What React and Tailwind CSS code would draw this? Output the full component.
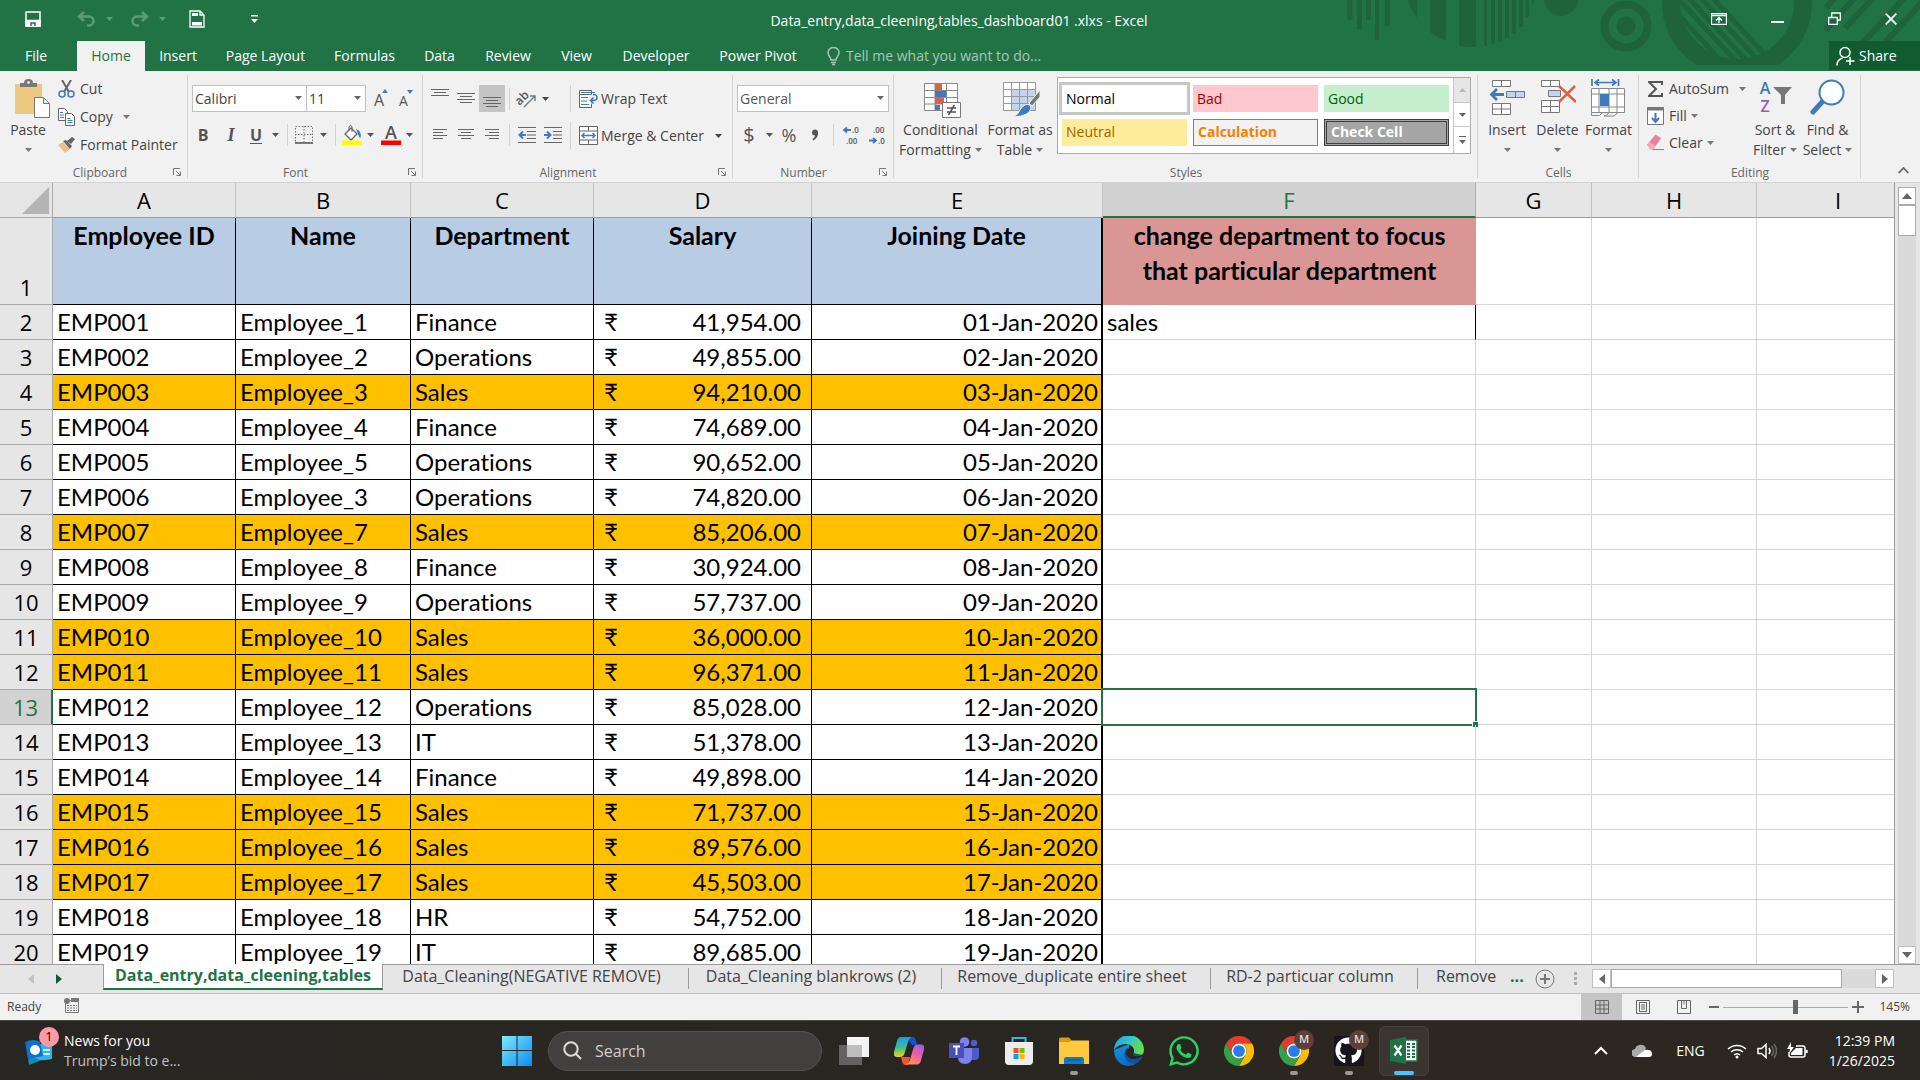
import React from "react";
import { FaWhatsapp, FaGithub } from "react-icons/fa";

const ui = "font-['Open_Sans','Noto_Sans',sans-serif]";

const Caret = ({ className = "" }) => (
  <svg width="7" height="4" viewBox="0 0 7 4" className={`shrink-0 ${className}`} fill="currentColor">
    <path d="M0 0h7L3.5 4z" />
  </svg>
);

const Arrow = ({ className = "" }) => (
  <svg width="10" height="6" viewBox="0 0 10 6" className={`shrink-0 ${className}`} fill="currentColor">
    <path d="M0 0h10L5 6z" />
  </svg>
);

const Launcher = () => (
  <button aria-label="More options" className="absolute right-[7px] bottom-[6px]">
    <svg width="8" height="8" viewBox="0 0 8 8" fill="none" stroke="#777">
      <path d="M.5 7V.5H7M3 3l4 4M7.5 3.5v4h-4" />
    </svg>
  </button>
);

const Group = ({ label, className, labelClass = "", launcher, children }) => (
  <section className={`relative flex shrink-0 flex-col ${className}`}>
    <div className="flex h-[89px] shrink-0 px-1">{children}</div>
    <div className={`h-[22px] shrink-0 text-center text-xs leading-[26px] text-[#666] ${labelClass}`}>{label}</div>
    {launcher && <Launcher />}
    <span className="absolute top-1 right-0 h-[103px] w-px bg-[#d2d2d2]" />
  </section>
);

const Sep = ({ className = "" }) => <span className={`h-[22px] w-px shrink-0 bg-[#d2d2d2] ${className}`} />;

/* ---------- title bar ---------- */
const Backdrop = () => (
  <svg className="absolute top-0 right-0" width="580" height="71" viewBox="0 0 580 71" fill="#1e633c">
    <path d="M7.500 0h5v20h-5zM17 0h5v29h-5zM26 0h5v20h-5zM35 0h4v40h-4zM45 0h5v26h-5z" />
    <path d="M68 0h9v18q-6-8-9-18zM90 0h16v41q-9-3-16-9zM119 0h17v47h-8l-9-1z" />
    <path d="M144 0h3v46h-3zM151 0h4v44h-4zM158 0h4v42h-4zM165 0h4v38h-4zM172 0h4v34h-4zM179 0h4v27h-4zM186 0h3v17h-3zM192 0h3l-3 8z" />
    <circle cx="221" cy="-1" r="17" />
    <circle cx="286" cy="26" r="21.500" fill="none" stroke="#1e633c" strokeWidth="8" />
    <circle cx="286" cy="26" r="9.500" />
    <clipPath id="ringCut"><path d="M300 0h200v65H300z" /></clipPath>
    <clipPath id="ringIn"><circle cx="397" cy="2" r="58" /></clipPath>
    <circle cx="397" cy="2" r="66" fill="none" stroke="#1e633c" strokeWidth="18" clipPath="url(#ringCut)" />
    <g clipPath="url(#ringIn)" stroke="#1e633c" strokeWidth="5">
      <path d="M330 5l60 66M330-10l75 81M336-16l80 87M348-16l80 87M360-16l80 87" />
    </g>
    <g stroke="#1e633c" strokeWidth="6">
      <path d="M486 8l10-12M486 30l32-36M505 28l32-34M518 48l50-54M540 48l46-50" />
    </g>
  </svg>
);

const TitleBar = () => (
  <div className="relative flex h-[41px] items-center text-white">
    <div className="flex flex-1 items-center pb-1 pl-[25px]">
      <button aria-label="Save" className="mr-9">
        <svg width="16" height="16" viewBox="0 0 16 16" fill="none" stroke="#fff" strokeWidth="1.500">
          <path d="M1 1h14v14H1z" /><path d="M1 9.500h14V15H1z" fill="#fff" /><path d="M6 15v-3h4v3" stroke="#217346" />
        </svg>
      </button>
      <button aria-label="Undo" className="mr-[10px] text-[#5d9b78]">
        <svg width="19" height="16" viewBox="0 0 19 16" fill="none" stroke="currentColor" strokeWidth="2.500">
          <path d="M7 1L2 5.500 7 10M2 5.500h10a4.500 4.500 0 0 1 0 9h-2" />
        </svg>
      </button>
      <Caret className="mr-[17px] text-[#5d9b78]" />
      <button aria-label="Redo" className="mr-[10px] text-[#5d9b78]">
        <svg width="19" height="16" viewBox="0 0 19 16" fill="none" stroke="currentColor" strokeWidth="2.500">
          <path d="M12 1l5 4.500L12 10M17 5.500H7a4.500 4.500 0 0 0 0 9h2" />
        </svg>
      </button>
      <Caret className="mr-[23px] text-[#5d9b78]" />
      <button aria-label="Print preview" className="mr-[46px]">
        <svg width="16" height="18" viewBox="0 0 16 18" fill="none" stroke="#fff" strokeWidth="1.300">
          <path d="M1 1h10l4 4v12H1zM11 1v4h4" /><path d="M3 3h6v3H3zM3 12h10v3.500H3z" fill="#fff" stroke="none" />
        </svg>
      </button>
      <button aria-label="Customize quick access toolbar">
        <svg width="7" height="8" viewBox="0 0 7 8" fill="#fff"><path d="M0 0h7v1.500H0zM0 4h7L3.500 8z" /></svg>
      </button>
    </div>
    <h1 className="pr-1 text-sm">Data_entry,data_cleening,tables_dashboard01 .xlxs - Excel</h1>
    <div className="relative flex flex-1 items-center justify-end gap-11 pr-[23px] pb-1">
      <button aria-label="Ribbon display options">
        <svg width="16" height="12" viewBox="0 0 16 12" fill="none" stroke="#fff"><path d="M.5.5h15v11H.5zM.5 2.500h15M8 10V4.500M5 7.500l3-3 3 3" strokeWidth="1.300" /></svg>
      </button>
      <button aria-label="Minimize"><svg width="13" height="12" viewBox="0 0 13 12"><path d="M0 8h13v2H0z" fill="#fff" /></svg></button>
      <button aria-label="Restore">
        <svg width="13" height="13" viewBox="0 0 13 13" fill="none" stroke="#fff" strokeWidth="1.300"><path d="M.7 5.500h8.600v6.800H.7zM3.700 5V1h8.600v7H9.500" /></svg>
      </button>
      <button aria-label="Close"><svg width="12" height="12" viewBox="0 0 12 12" stroke="#fff" strokeWidth="1.800"><path d="M.7.7l10.600 10.600M11.300.7L.7 11.300" /></svg></button>
    </div>
  </div>
);

const tabs = [
  ["Insert", "w-[66px]"], ["Page Layout", "w-[109px]"], ["Formulas", "w-[89px]"], ["Data", "w-[61px]"], ["Review", "w-[76px]"],
  ["View", "w-[61px]"], ["Developer", "w-[98px]"], ["Power Pivot", "w-[106px]"],
];

const Tabs = () => (
  <nav className="relative flex h-[30px] text-sm leading-7 text-white">
    <button className="w-[77px] pr-[5px]">File</button>
    <button className="w-[68px] bg-[#f1f1f1] text-[#217346]">Home</button>
    {tabs.map(([t, w]) => <button key={t} className={`shrink-0 whitespace-nowrap ${w}`}>{t}</button>)}
    <label className="ml-4 flex flex-1 items-center gap-1.5">
      <svg width="13" height="19" viewBox="0 0 13 19" fill="none" stroke="#a6c7b5" strokeWidth="1.500">
        <path d="M4 13c0-3-3-4-3-7.500a5.500 5 0 0 1 11 0C12 9 9 10 9 13zM4 15.500h5M5 17.500h3" />
      </svg>
      <input placeholder="Tell me what you want to do..." className="w-60 bg-transparent text-sm text-white outline-none placeholder:text-[#a6c7b5]" />
    </label>
    <button className="flex h-[29px] w-[91px] items-center gap-1 bg-[#105c30] pl-[7px]">
      <svg width="19" height="20" viewBox="0 0 19 20" fill="none" stroke="#fff" strokeWidth="1.500">
        <circle cx="9" cy="6.500" r="5" /><path d="M1 19.500c0-4 2-6.500 5.500-7.500M14 11v8M10 15h8.500" />
      </svg>
      Share
    </button>
  </nav>
);

/* ---------- ribbon icons ---------- */
const PasteIcon = () => (
  <svg width="35" height="39" viewBox="0 0 35 39">
    <path d="M0 5h27v30H0z" fill="#edc87f" />
    <path d="M5 8V4h4q0-4 4.500-4T18 4h4v4z" fill="#777" /><circle cx="13.500" cy="3.500" r="1.300" fill="#fff" />
    <path d="M19.500 18.500h9l6 6v14h-15zM28.500 18.500v6h6" fill="#fff" stroke="#777" />
  </svg>
);
const CutIcon = () => (
  <svg width="17" height="18" viewBox="0 0 17 18" fill="none">
    <path d="M4 0l7 12M13 0L6 12" stroke="#666" strokeWidth="2" />
    <circle cx="4" cy="14" r="3" stroke="#3f7abd" strokeWidth="1.500" /><circle cx="13" cy="14" r="3" stroke="#3f7abd" strokeWidth="1.500" />
  </svg>
);
const CopyIcon = () => (
  <svg width="17" height="18" viewBox="0 0 17 18" fill="#fff" stroke="#666">
    <path d="M.5.5h6l3 3v9h-9z" /><path d="M7.500 5.500h6l3 3v9h-9z" />
    <path d="M2 4.500h3M2 7h4M2 9.500h4M9.500 10.500h3M9.500 12.500h5M9.500 14.500h5" stroke="#3f7abd" />
  </svg>
);
const PainterIcon = () => (
  <svg width="17" height="16" viewBox="0 0 17 16">
    <path d="M0 8l5-3 7 7-5 4z" fill="#edc28a" /><path d="M5 4l3-1 6 6-2 3zM9 4l5-4 3 2-4 5z" fill="#666" />
  </svg>
);
const Lines = ({ rows }) => (
  <svg width="18" height="14" viewBox="0 0 18 14" fill="#666">
    {rows.map(([x, w], i) => <rect key={i} x={x} y={i * 3 + 1} width={w} height="1" />)}
  </svg>
);
const IndentIcon = ({ flip }) => (
  <svg width="18" height="16" viewBox="0 0 18 16">
    <path d="M0 0h18v1H0zM9 4h9v1H9zM9 7.500h9v1H9zM9 11h9v1H9zM0 15h18v1H0z" fill="#666" />
    {flip
      ? <path d="M0 8h6M3 4.500L6.500 8 3 11.500" fill="none" stroke="#3f7abd" strokeWidth="2" />
      : <path d="M8 8H2M5 4.500L1.500 8 5 11.500" fill="none" stroke="#3f7abd" strokeWidth="2" />}
  </svg>
);
const OrientIcon = () => (
  <svg width="19" height="18" viewBox="0 0 19 18" className="overflow-visible">
    <text x="-1" y="12" transform="rotate(-45 5 11)" fontSize="12" fill="#555" fontWeight="600">ab</text>
    <path d="M6 17L17 6M12 6h5v5" fill="none" stroke="#777" strokeWidth="1.400" />
  </svg>
);
const WrapIcon = () => (
  <svg width="19" height="18" viewBox="0 0 19 18" fill="none" stroke="#666">
    <path d="M.5.5h12v4H.5zM.5 4.500v13h12v-4" fill="#fff" /><path d="M2 2.500h14M2 7.500h7M2 11h6M2 14.500h8" stroke="#3f7abd" />
    <path d="M14 4.500q4 0 4 3t-4 3h-2M14.500 7.500l-3 3 3 3" stroke="#3f7abd" strokeWidth="1.600" />
  </svg>
);
const MergeIcon = () => (
  <svg width="19" height="19" viewBox="0 0 19 19" fill="#fff" stroke="#666">
    <path d="M.5.500h18v18H.5zM.5 5h18M.5 14h18M9.500.5V5M9.500 14v4.500" />
    <path d="M3 9.500h13M5.500 7L3 9.500 5.500 12M13.500 7L16 9.500 13.500 12" fill="none" stroke="#3f7abd" strokeWidth="1.500" />
  </svg>
);
const BorderIcon = () => (
  <svg width="18" height="18" viewBox="0 0 18 18" fill="none" stroke="#777">
    <path d="M.5.500h17v16H.5zM9 0v17M0 8.500h18" strokeDasharray="1.500 1.500" /><path d="M0 17h18" strokeWidth="1.500" stroke="#555" />
  </svg>
);
const FillIcon = () => (
  <svg width="20" height="20" viewBox="0 0 20 20">
    <path d="M9 3l6 6-6 6-6-6z" fill="#fff" stroke="#666" strokeWidth="1.300" /><path d="M7 6V1.500q2-2 3 0V7" fill="none" stroke="#666" />
    <path d="M14 4q6 2 4.500 9-2-1-2.500-4z" fill="#3f7abd" /><path d="M0 15.500h20v4.500H0z" fill="#ff0" />
  </svg>
);
const FontColorIcon = () => (
  <svg width="20" height="20" viewBox="0 0 20 20" className="overflow-visible">
    <text x="10" y="13.500" textAnchor="middle" fontSize="18" fontWeight="600" fill="#555">A</text><path d="M0 15.500h20v4.500H0z" fill="red" />
  </svg>
);
const CondIcon = () => (
  <svg width="37" height="35" viewBox="0 0 37 35">
    <path d="M.5.5h33v27H.5zM.5 7.500h33M.5 14.500h33M.5 21h33M11 .5v27M22.500.5v27" fill="#fff" stroke="#888" />
    <path d="M11 1h7v6h-7zM11 15h9v6h-9z" fill="#dc6141" /><path d="M11 8h11v6H11zM11 22h5v5h-5z" fill="#3f7abd" />
    <path d="M18.500 19.500h18v15h-18z" fill="#fff" stroke="#777" /><path d="M23 25h9M23 29h9M30.500 22l-6 10" stroke="#555" strokeWidth="1.500" />
  </svg>
);
const FormatTableIcon = () => (
  <svg width="38" height="36" viewBox="0 0 38 36">
    <path d="M.5.5h32v28H.5z" fill="#fff" /><path d="M9 8h24v20H9z" fill="#c2d5ec" />
    <path d="M.5.5h32v28H.5zM.5 7.500h32M.5 14.500h32M.5 21.500h32M8.500.5v28M16.500.5v28M24.500.5v28" fill="none" stroke="#999" />
    <path d="M37 8v7l-8 9-3-3z" fill="#777" stroke="#f1f1f1" /><path d="M22 23q5-2 6 3-1 8-18 9 6-3 7-7 1-3 5-5z" fill="#3f7abd" stroke="#f1f1f1" />
  </svg>
);
const InsertIcon = () => (
  <svg width="36" height="37" viewBox="0 0 36 37" fill="#fff" stroke="#777">
    <path d="M3.500 1.500h18v6h-18zM12.500 1.500v6M3.500 24.500h18v11h-18zM12.500 24.500v11M3.500 30h18" />
    <path d="M17.500 12.500h18v6h-18zM26.500 12.500v6" fill="#c2d5ec" /><path d="M15 15.500H2M8 10l-5.500 5.500L8 21" fill="none" stroke="#3f7abd" strokeWidth="2.800" />
  </svg>
);
const DeleteIcon = () => (
  <svg width="36" height="37" viewBox="0 0 36 37" fill="#fff" stroke="#777">
    <path d="M1.500 1.500h18v6h-18zM10.500 1.500v6M1.500 21.500h18v12h-18zM10.500 21.500v12M1.500 27.500h18" />
    <path d="M8.500 11.500h12v6h-12z" fill="#c2d5ec" /><path d="M19 7l17 16M35 7L19 23" fill="none" stroke="#dc6141" strokeWidth="2.500" />
  </svg>
);
const FormatIcon = () => (
  <svg width="35" height="38" viewBox="0 0 35 38" fill="#fff" stroke="#888">
    <path d="M.5 9.500h33v24H.5zM.5 15h33M.5 28h33M8 9.500v24M18 9.500v24M26 9.500v24" /><path d="M.5 33.500v3h8l3-3M13 37q3 0 5-3.500M13 37h10l4-3.500" fill="none" />
    <path d="M9 15h9v12H9z" fill="#3f7abd" stroke="none" /><path d="M1 0v7M27.500 0v7M4 3.500h21M8 .5L4 3.500l4 3M21 .5l4 3-4 3" fill="none" stroke="#3f7abd" strokeWidth="1.700" />
  </svg>
);
const SortIcon = () => (
  <span className="flex items-start">
    <span className="flex w-4 flex-col text-base leading-[18px] font-semibold"><span className="text-[#3f7abd]">A</span><span className="text-[#8e62b8]">Z</span></span>
    <svg width="20" height="36" viewBox="16 0 20 36"><path d="M16 8h19l-7 8v9h-4v-9z" fill="#777" /></svg>
  </span>
);
const FindIcon = () => (
  <svg width="35" height="36" viewBox="0 0 35 36">
    <path d="M13 22L3 33" stroke="#3f7abd" strokeWidth="5" strokeLinecap="round" /><circle cx="21.500" cy="13.500" r="12" fill="#fff" stroke="#3f7abd" strokeWidth="2" />
  </svg>
);

const IconBtn = ({ label, className = "", children }) => (
  <button aria-label={label} className={`flex shrink-0 items-center justify-center ${className}`}>{children}</button>
);

const BigButton = ({ icon, lines, className, iconClass = "", caretBelow }) => (
  <button className={`flex shrink-0 flex-col items-center ${className}`}>
    <span className={`flex h-[49px] items-start justify-center ${iconClass || "pt-2"}`}>{icon}</span>
    <span className="leading-5 whitespace-nowrap">{lines[0]}</span>
    {caretBelow
      ? <Caret className="mt-2 text-[#777]" />
      : <span className="flex items-center gap-1 leading-5">{lines[1]}<Caret className="text-[#777]" /></span>}
  </button>
);

const SmallButton = ({ icon, text, caret, gap = "gap-1" }) => (
  <button className="flex h-[27px] items-center whitespace-nowrap">
    <span className="flex w-[17px] justify-center">{icon}</span>
    <span className={`flex items-center pl-[5px] ${gap}`}>{text}{caret && <Caret className="text-[#777]" />}</span>
  </button>
);

const Combo = ({ label, options, className }) => (
  <div className={`relative h-[27px] shrink-0 ${className}`}>
    <select aria-label={label} className="h-full w-full appearance-none border border-[#c0c0c0] bg-white pl-[2px] text-sm outline-none">
      {options.map((o) => <option key={o}>{o}</option>)}
    </select>
    <Caret className="pointer-events-none absolute top-[11px] right-[5px] text-[#666]" />
  </div>
);

const styles = [
  ["Normal", "bg-white text-black outline-3 outline-[#c6c6c6]"], ["Bad", "bg-[#ffc7ce] text-[#9c0006]"], ["Good", "bg-[#c6efce] text-[#006100]"],
  ["Neutral", "bg-[#ffeb9c] text-[#9c6500]"], ["Calculation", "border border-[#7f7f7f] bg-[#f2f2f2] font-bold text-[#fa7d00]"],
  ["Check Cell", "border-3 border-double border-[#3f3f3f] bg-[#a5a5a5] font-bold text-white"],
];

const Ribbon = () => (
  <div className="flex h-[112px] border-b border-[#d2d2d2] bg-[#f1f1f1] text-sm text-[#444]">
    <Group label="Clipboard" className="w-[188px]" labelClass="pl-3" launcher>
      <button className="flex w-[54px] shrink-0 flex-col pt-2">
        <span className="h-[41px] pl-[11px]"><PasteIcon /></span>
        <span className="w-12 text-center leading-5">Paste</span>
        <span className="mt-2 flex w-12 justify-center"><Caret className="text-[#777]" /></span>
      </button>
      <div className="flex flex-col gap-px pt-1">
        <SmallButton icon={<CutIcon />} text="Cut" />
        <SmallButton icon={<CopyIcon />} text="Copy" caret gap="gap-2.5" />
        <SmallButton icon={<PainterIcon />} text="Format Painter" />
      </div>
    </Group>

    <Group label="Font" className="w-[235px]" labelClass="pr-5" launcher>
      <div className="flex flex-col gap-3 pt-[14px]">
        <div className="flex items-center">
          <Combo label="Font name" options={["Calibri", "Arial"]} className="w-[115px]" />
          <Combo label="Font size" options={["11", "12", "14"]} className="-ml-px w-[60px]" />
          <IconBtn label="Increase font size" className="ml-2">
            <svg width="14" height="20" viewBox="0 0 14 20" className="overflow-visible"><text x="0" y="17" fontSize="16" fill="#555">A</text><path d="M8 4l3-4 3 4z" fill="#3f7abd" /></svg>
          </IconBtn>
          <IconBtn label="Decrease font size" className="ml-[11px]">
            <svg width="14" height="20" viewBox="0 0 14 20" className="overflow-visible"><text x="0" y="17" fontSize="14" fill="#555">A</text><path d="M8 1h6l-3 4z" fill="#3f7abd" /></svg>
          </IconBtn>
        </div>
        <div className="flex h-[22px] items-center text-[#555]">
          <IconBtn label="Bold" className="w-[22px] text-base font-bold">B</IconBtn>
          <IconBtn label="Italic" className="w-[34px] font-['Liberation_Serif',serif] text-lg font-bold italic">I</IconBtn>
          <IconBtn label="Underline" className="w-4 text-base font-bold underline underline-offset-2">U</IconBtn>
          <Caret className="mx-2" /><Sep />
          <IconBtn label="Borders" className="mx-[7px]"><BorderIcon /></IconBtn><Caret className="mr-2" /><Sep />
          <IconBtn label="Fill color" className="mr-[5px] ml-[6px]"><FillIcon /></IconBtn><Caret />
          <IconBtn label="Font color" className="mr-[5px] ml-[7px]"><FontColorIcon /></IconBtn><Caret />
        </div>
      </div>
    </Group>

    <Group label="Alignment" className="w-[310px]" labelClass="pr-5" launcher>
      <div className="flex w-[143px] shrink-0 flex-col gap-3 pt-[14px]">
        <div className="flex h-[27px] items-center">
          <IconBtn label="Top align" className="h-[27px] w-[26px] pb-2"><Lines rows={[[0, 18], [3, 12], [0, 18]]} /></IconBtn>
          <IconBtn label="Middle align" className="h-[27px] w-[26px]"><Lines rows={[[0, 18], [3, 12], [0, 18], [3, 12]]} /></IconBtn>
          <IconBtn label="Bottom align" className="h-[27px] w-[26px] bg-[#c5c5c5] pt-2"><Lines rows={[[0, 18], [3, 12], [0, 18], [3, 12]]} /></IconBtn>
          <Sep className="ml-1" />
          <IconBtn label="Orientation" className="mr-[5px] ml-2"><OrientIcon /></IconBtn><Caret />
        </div>
        <div className="flex h-[22px] items-center">
          <IconBtn label="Align left" className="w-[26px]"><Lines rows={[[2, 14], [2, 10], [2, 14], [2, 10]]} /></IconBtn>
          <IconBtn label="Center" className="w-[26px]"><Lines rows={[[1, 16], [4, 10], [1, 16], [4, 10]]} /></IconBtn>
          <IconBtn label="Align right" className="w-[26px]"><Lines rows={[[2, 14], [6, 10], [2, 14], [6, 10]]} /></IconBtn>
          <Sep className="ml-1" />
          <IconBtn label="Decrease indent" className="ml-2"><IndentIcon /></IconBtn>
          <IconBtn label="Increase indent" className="ml-2"><IndentIcon flip /></IconBtn>
        </div>
      </div>
      <div className="flex shrink-0 flex-col gap-[10px] pt-[14px]">
        <button className="flex h-[27px] items-center gap-[3px] border-l border-[#d2d2d2] pl-2 whitespace-nowrap"><WrapIcon />Wrap Text</button>
        <button className="flex h-[27px] items-center gap-[3px] border-l border-[#d2d2d2] pl-2 whitespace-nowrap"><MergeIcon />Merge &amp; Center<Caret className="ml-2" /></button>
      </div>
    </Group>

    <Group label="Number" className="w-[161px]" labelClass="pr-5" launcher>
      <div className="flex shrink-0 flex-col gap-3 pt-[14px] text-[#555]">
        <Combo label="Number format" options={["General", "Number", "Currency"]} className="w-[152px]" />
        <div className="flex h-[22px] items-center">
          <IconBtn label="Accounting format" className="w-6 text-xl">$</IconBtn><Caret className="mr-1 ml-[5px]" />
          <IconBtn label="Percent style" className="w-6 text-lg">%</IconBtn>
          <IconBtn label="Comma style" className="mr-[11px] ml-[7px] w-[14px]">
            <svg width="8" height="12" viewBox="0 0 8 12" fill="#555"><circle cx="4" cy="3.500" r="3" /><path d="M7 3.500Q7.500 9 2 11.500L1.500 10q3-2 2.500-5z" /></svg>
          </IconBtn>
          <Sep />
          {[["Increase decimal", 0], ["Decrease decimal", 1]].map(([l, d]) => (
            <IconBtn key={l} label={l} className="ml-[9px]">
              <svg width="17" height="22" viewBox="0 0 17 22" fontSize="8" fontWeight="600" fill="#555" className="overflow-visible">
                <text x={d ? 4 : 9} y="9">{d ? ".00" : ".0"}</text><text x={d ? 9 : 3} y="20">{d ? ".0" : ".00"}</text>
                <path d={d ? "M0 16.500h6M4 14l3 2.500-3 2.500" : "M8 6H2M4 3.500L1 6l3 2.500"} fill="none" stroke="#3f7abd" strokeWidth="1.800" />
              </svg>
            </IconBtn>
          ))}
        </div>
      </div>
    </Group>

    <Group label="Styles" className="w-[584px]">
      <BigButton icon={<CondIcon />} lines={["Conditional", "Formatting"]} className="w-[85px]" iconClass="pt-3 pl-1" />
      <BigButton icon={<FormatTableIcon />} lines={["Format as", "Table"]} className="w-[74px]" iconClass="pt-[11px] pl-1" />
      <div className="mt-1.5 flex h-[77px] border border-[#ababab] bg-white">
        <div className="grid grid-cols-3 gap-x-[6px] gap-y-[6px] px-1 py-[7px]">
          {styles.map(([s, c]) => <button key={s} className={`h-[27px] w-[125px] pl-1 text-left leading-5 ${c}`}>{s}</button>)}
        </div>
        <div className="flex w-[17px] flex-col border-l border-[#c6c6c6] text-[#666]">
          <IconBtn label="Previous styles" className="h-[25px] border-b border-[#c6c6c6] bg-[#e6e6e6] text-[#bbb]"><Caret className="rotate-180" /></IconBtn>
          <IconBtn label="Next styles" className="h-[24px] border-b border-[#c6c6c6]"><Caret /></IconBtn>
          <IconBtn label="More styles" className="flex-1 flex-col gap-[3px]"><span className="h-px w-[7px] bg-[#666]" /><Caret /></IconBtn>
        </div>
      </div>
    </Group>

    <Group label="Cells" className="w-[161px]">
      <BigButton icon={<InsertIcon />} lines={["Insert"]} className="w-[50px]" caretBelow />
      <BigButton icon={<DeleteIcon />} lines={["Delete"]} className="w-[51px]" caretBelow />
      <BigButton icon={<FormatIcon />} lines={["Format"]} className="w-[51px]" caretBelow />
    </Group>

    <Group label="Editing" className="w-[222px]">
      <div className="flex w-[105px] shrink-0 flex-col pt-1 pl-1">
        <SmallButton icon={<svg width="15" height="16" viewBox="0 0 15 16"><path d="M14 4V1H1l7 7-7 7h13v-3" fill="none" stroke="#555" strokeWidth="2" /></svg>} text="AutoSum" caret gap="gap-2.5" />
        <SmallButton icon={<svg width="17" height="18" viewBox="0 0 17 18" fill="none"><path d="M.5.5h16v17H.5z" fill="#fff" stroke="#777" /><path d="M0 2h17" stroke="#777" strokeWidth="3" /><path d="M8.500 6v9M5 11l3.500 4 3.500-4" stroke="#3f7abd" strokeWidth="2" /></svg>} text="Fill" caret />
        <SmallButton icon={<svg width="18" height="17" viewBox="0 0 18 17"><path d="M0 11L9 0l6 4-8 11H4z" fill="#e8829a" /><path d="M0 11l3-3 6 4-2 4H3z" fill="#f0a9b9" /><path d="M6 16h12" stroke="#777" /></svg>} text="Clear" caret />
      </div>
      <BigButton icon={<SortIcon />} lines={["Sort &", "Filter"]} className="w-[54px]" />
      <BigButton icon={<FindIcon />} lines={["Find &", "Select"]} className="w-[51px]" />
    </Group>
    <button aria-label="Collapse the ribbon" className="ml-auto self-end p-3 pr-[11px] pb-2">
      <svg width="11" height="7" viewBox="0 0 11 7" fill="none" stroke="#666" strokeWidth="1.800"><path d="M.7 6L5.500 1l4.800 5" /></svg>
    </button>
  </div>
);

/* ---------- sheet ---------- */
const rows = [
  ["EMP001", "Employee_1", "Finance", "41,954.00"], ["EMP002", "Employee_2", "Operations", "49,855.00"],
  ["EMP003", "Employee_3", "Sales", "94,210.00"], ["EMP004", "Employee_4", "Finance", "74,689.00"],
  ["EMP005", "Employee_5", "Operations", "90,652.00"], ["EMP006", "Employee_3", "Operations", "74,820.00"],
  ["EMP007", "Employee_7", "Sales", "85,206.00"], ["EMP008", "Employee_8", "Finance", "30,924.00"],
  ["EMP009", "Employee_9", "Operations", "57,737.00"], ["EMP010", "Employee_10", "Sales", "36,000.00"],
  ["EMP011", "Employee_11", "Sales", "96,371.00"], ["EMP012", "Employee_12", "Operations", "85,028.00"],
  ["EMP013", "Employee_13", "IT", "51,378.00"], ["EMP014", "Employee_14", "Finance", "49,898.00"],
  ["EMP015", "Employee_15", "Sales", "71,737.00"], ["EMP016", "Employee_16", "Sales", "89,576.00"],
  ["EMP017", "Employee_17", "Sales", "45,503.00"], ["EMP018", "Employee_18", "HR", "54,752.00"],
  ["EMP019", "Employee_19", "IT", "89,685.00"],
];
const cell = "border-r border-b border-black whitespace-nowrap";
const blank = "border-r border-b border-[#d4d4d4]";
const rowHead = "border-r border-b border-[#ababab] text-center font-normal";

const Sheet = () => (
  <div className="min-w-0 flex-1 overflow-hidden border-r border-[#9b9b9b] bg-white">
    <table className="w-full table-fixed border-separate border-spacing-0 font-['Lato',sans-serif] text-2xl leading-[34px] text-black [font-variant-ligatures:none]">
      <colgroup>
        <col className="w-[53px]" /><col className="w-[183px]" /><col className="w-[175px]" /><col className="w-[183px]" /><col className="w-[218px]" />
        <col className="w-[291px]" /><col className="w-[373px]" /><col className="w-[116px]" /><col className="w-[165px]" /><col />
      </colgroup>
      <thead className={`${ui} text-[22px] leading-[34px]`}>
        <tr className="h-[35px] bg-[#e6e6e6]">
          <th className="border-r border-b border-[#ababab]">
            <svg width="27" height="27" viewBox="0 0 27 27" className="ml-auto mr-[3px]"><path d="M27 0v27H0z" fill="#b4b4b4" /></svg>
          </th>
          {["A", "B", "C", "D", "E", "F", "G", "H"].map((c) => (
            <th key={c} scope="col" className={`font-normal ${c === "F" ? "border-r border-b-2 border-r-[#ababab] border-b-[#217346] bg-[#d2d2d2] leading-8 text-[#217346]" : "border-r border-b border-r-[#c0c0c0] border-b-[#9b9b9b]"}`}>{c}</th>
          ))}
          <th scope="col" className="border-b border-[#9b9b9b] pl-[25px] font-normal">I</th>
        </tr>
      </thead>
      <tbody>
        <tr className="h-[87px] align-top">
          <th scope="row" className={`${rowHead} ${ui} bg-[#e6e6e6] align-bottom text-[22px]`}>1</th>
          {["Employee ID", "Name", "Department", "Salary", "Joining Date"].map((h) => (
            <th key={h} className={`border-b border-black bg-[#b8cce4] text-[25px] ${h === "Joining Date" ? "border-r-2" : "border-r"}`}>{h}</th>
          ))}
          <th className="bg-[#da9694] px-5 text-[25px] leading-[35px]">change department to focus that particular department</th>
          <td className={blank} /><td className={blank} /><td className="border-b border-[#d4d4d4]" />
        </tr>
        {rows.map(([id, name, dept, sal], i) => {
          const n = i + 2;
          const active = n === 13;
          return (
            <tr key={id} className="h-[35px]">
              <th scope="row" className={`${ui} text-[22px] leading-[34px] ${active ? "border-r-2 border-b border-r-[#217346] border-b-[#ababab] bg-[#d2d2d2] text-center font-normal text-[#217346]" : `${rowHead} bg-[#e6e6e6]`}`}>{n}</th>
              <td className={`${cell} pl-1 ${dept === "Sales" ? "bg-[#ffc000]" : ""}`}>{id}</td>
              <td className={`${cell} pl-1 ${dept === "Sales" ? "bg-[#ffc000]" : ""}`}>{name}</td>
              <td className={`${cell} pl-1 ${dept === "Sales" ? "bg-[#ffc000]" : ""}`}>{dept}</td>
              <td className={`${cell} ${dept === "Sales" ? "bg-[#ffc000]" : ""}`}>
                <div className="flex justify-between pr-[10px] pl-[10px]"><span>₹</span><span>{sal}</span></div>
              </td>
              <td className={`border-r-2 border-b border-black pr-[3px] text-right whitespace-nowrap ${dept === "Sales" ? "bg-[#ffc000]" : ""}`}>
                {String(i + 1).padStart(2, "0")}-Jan-2020
              </td>
              <td className={`relative pl-1 ${i === 0 ? "border-r border-b border-r-black border-b-[#d4d4d4]" : blank}`}>
                {i === 0 && "sales"}
                {active && (
                  <span className="absolute -top-0.5 -right-0.5 -bottom-0.5 -left-0.5 border-2 border-[#217346]">
                    <span className="absolute -right-[3px] -bottom-[3px] size-[6px] border-t border-l border-white bg-[#217346]" />
                  </span>
                )}
              </td>
              <td className={blank} /><td className={blank} /><td className="border-b border-[#d4d4d4]" />
            </tr>
          );
        })}
      </tbody>
    </table>
  </div>
);

const VScroll = () => (
  <div className="flex w-[25px] shrink-0 flex-col bg-[#e6e6e6] pt-1 pr-1 pl-[3px] text-[#666]">
    <IconBtn label="Scroll up" className="h-[18px] border border-[#ababab] bg-white"><Arrow className="rotate-180" /></IconBtn>
    <div className="flex-1 bg-[#dadada]"><div className="h-[31px] border border-[#ababab] bg-white" /></div>
    <IconBtn label="Scroll down" className="h-[18px] border border-[#c0c0c0] bg-white"><Arrow /></IconBtn>
  </div>
);

const sheets = [
  ["Data_Cleaning(NEGATIVE REMOVE)", "w-[306px]"], ["Data_Cleaning blankrows (2)", "w-[253px]"],
  ["Remove_duplicate entire sheet", "w-[269px]"], ["RD-2 particuar column", "w-[207px]"],
];

const SheetTabs = () => (
  <div className="flex h-[29px] items-start bg-[#e6e6e6] text-base text-[#444]">
    <div className="flex h-full w-[103px] items-center gap-[22px] border-t border-[#9b9b9b] pl-[28px]">
      <IconBtn label="Previous sheet"><svg width="6" height="10"><path d="M6 0v10L0 5z" fill="#c0c0c0" /></svg></IconBtn>
      <IconBtn label="Next sheet"><svg width="6" height="10"><path d="M0 0v10l6-5z" fill="#105c30" /></svg></IconBtn>
    </div>
    <button className="h-[26px] w-[280px] shrink-0 border-x border-b-2 border-x-[#9b9b9b] border-b-[#217346] bg-white pb-0.5 leading-[22px] font-bold whitespace-nowrap text-[#217346]">Data_entry,data_cleening,tables</button>
    <div className="flex h-full min-w-0 flex-1 items-start border-t border-[#9b9b9b] pr-[26px]">
      {sheets.map(([s, w]) => (
        <button key={s} className={`mt-[3px] h-[21px] shrink-0 border-r border-[#9b9b9b] pr-2 pb-[5px] leading-4 whitespace-nowrap ${w}`}>{s}</button>
      ))}
      <button className="w-[78px] pl-[18px] text-left leading-[22px]">Remove</button>
      <button className="w-[39px] pl-[14px] text-left leading-[22px] font-bold text-[#217346]">...</button>
      <IconBtn label="New sheet" className="mt-1">
        <svg width="20" height="20" viewBox="0 0 20 20" fill="none" stroke="#777"><circle cx="10" cy="10" r="9" /><path d="M5 10h10M10 5v10" strokeWidth="2" /></svg>
      </IconBtn>
      <svg width="4" height="14" className="mt-[7px] ml-[19px]" fill="#ababab"><path d="M0 0h3v3H0zM0 5h3v3H0zM0 10h3v3H0z" /></svg>
      <div className="mt-1 ml-auto flex h-[19px] w-[302px] shrink-0 bg-[#dadada] text-[#666]">
        <IconBtn label="Scroll left" className="w-[19px] border border-[#c0c0c0] bg-white"><Arrow className="rotate-90" /></IconBtn>
        <div className="flex-1"><div className="h-full w-[231px] border border-[#ababab] bg-white" /></div>
        <IconBtn label="Scroll right" className="w-[19px] border border-[#c0c0c0] bg-white"><Arrow className="-rotate-90" /></IconBtn>
      </div>
    </div>
  </div>
);

const StatusBar = () => (
  <div className="flex h-[27px] items-center border-t border-[#c0c0c0] bg-[#f1f1f1] pr-[10px] pl-[7px] text-xs text-[#444]">
    Ready
    <svg width="15" height="15" viewBox="0 0 15 15" className="mb-1 ml-[23px]" fill="none" stroke="#777">
      <path d="M1.500 4v10.500h13v-12H6" /><path d="M7 0h8v4H7z" fill="#777" stroke="none" /><circle cx="3" cy="3" r="3" fill="#777" stroke="none" />
      <path d="M3 7.500h10M3 10h10M3 12.500h10" strokeDasharray="2 1" />
    </svg>
    <div className="ml-auto flex h-full items-center">
      <IconBtn label="Normal view" className="h-full w-[41px] bg-[#c5c5c5]">
        <svg width="14" height="14" viewBox="0 0 14 14" fill="none" stroke="#666"><path d="M.5.5h13v13H.5zM.5 5h13M.5 9h13M5 .5v13M9 .5v13" /></svg>
      </IconBtn>
      <IconBtn label="Page layout view" className="w-[41px]">
        <svg width="14" height="14" viewBox="0 0 14 14" fill="none" stroke="#666"><path d="M.5.5h13v13H.5zM3.500 2.500h7v9h-7zM5 5h4M5 7h4M5 9h4" /></svg>
      </IconBtn>
      <IconBtn label="Page break view" className="w-[41px]">
        <svg width="14" height="14" viewBox="0 0 14 14" fill="none" stroke="#666"><path d="M.5.5h13v13H.5zM4.500.5v8h5v-8M7 .5v4" /></svg>
      </IconBtn>
      <IconBtn label="Zoom out" className="ml-[5px]"><svg width="10" height="10"><path d="M0 4h10v2H0z" fill="#666" /></svg></IconBtn>
      <input type="range" aria-label="Zoom" defaultValue="58" className="mx-[4px] h-4 w-[125px] appearance-none bg-[linear-gradient(#ababab,#ababab)] bg-[length:100%_1px] bg-center bg-no-repeat [&::-webkit-slider-thumb]:h-[14px] [&::-webkit-slider-thumb]:w-[5px] [&::-webkit-slider-thumb]:appearance-none [&::-webkit-slider-thumb]:bg-[#666]" />
      <IconBtn label="Zoom in"><svg width="12" height="12"><path d="M0 5h12v2H0zM5 0h2v12H5z" fill="#666" /></svg></IconBtn>
      <span className="ml-[15px]">145%</span>
    </div>
  </div>
);

/* ---------- taskbar ---------- */
const Chrome = () => (
  <svg width="30" height="30" viewBox="0 0 24 24">
    <path d="M1.600 6a12 12 0 0 1 20.800 0H12a6 6 0 0 0-5.200 9z" fill="#e33b2e" />
    <path d="M22.400 6A12 12 0 0 1 12 24l5.200-9A6 6 0 0 0 12 6z" fill="#fbbc05" />
    <path d="M1.600 6l5.200 9a6 6 0 0 0 10.400 0L12 24A12 12 0 0 1 1.600 6z" fill="#34a047" />
    <circle cx="12" cy="12" r="6" fill="#fff" /><circle cx="12" cy="12" r="4.700" fill="#2b7bee" />
  </svg>
);
const Badge = () => <span className="absolute top-[3px] right-[7px] flex size-5 items-center justify-center rounded-full bg-[#5d4037] text-[11px] font-semibold text-[#ddd]">M</span>;

const apps = [
  ["Task view", <svg width="30" height="28" viewBox="0 0 30 28"><path d="M8 0h22v20H8z" fill="#f3f3f3" /><path d="M0 8h23v20H0z" fill="#777" fillOpacity=".75" /><path d="M8 8h15v12H8z" fill="#bdbdbd" /></svg>],
  ["Copilot", (
    <svg width="30" height="28" viewBox="0 0 30 28">
      <defs>
        <linearGradient id="cpA" x1="0" y1="0" x2="0" y2="1"><stop offset="0" stopColor="#1a9bf0" /><stop offset=".55" stopColor="#3fc08a" /><stop offset="1" stopColor="#f4d20c" /></linearGradient>
        <linearGradient id="cpB" x1=".8" y1="0" x2=".2" y2="1"><stop offset="0" stopColor="#a25bf0" /><stop offset=".5" stopColor="#f2609b" /><stop offset="1" stopColor="#fb9a4b" /></linearGradient>
      </defs>
      <path d="M14 0h5q2 0 3 4l1 4h-5l-3-4z" fill="#1550d0" /><path d="M7 20h9l-2 8h-3q-2 0-3-4z" fill="#f4553a" />
      <path d="M7 0h11q-3 1-4 5l-3 10q-1 5-5 5H3q-4 0-3-5L3 4q1-4 4-4z" fill="url(#cpA)" />
      <path d="M23 27.500H12q3-1 4-5l3-10q1-5 5-5h3q4 0 3 5l-3 11q-1 4-4 4z" fill="url(#cpB)" />
    </svg>
  )],
  ["Teams", <svg width="30" height="28" viewBox="0 0 30 28"><circle cx="25" cy="6" r="3.200" fill="#5059c9" /><path d="M20 11h10v8q0 4-4 4h-4z" fill="#5059c9" /><circle cx="15.500" cy="5" r="4.800" fill="#7b83eb" /><path d="M9 11h14v9q0 7-7 7t-7-7z" fill="#7b83eb" /><path d="M0 6h15v15H0z" fill="#4a50b8" /><path d="M4 9.500h7M7.500 9.500V18" stroke="#fff" strokeWidth="1.800" /></svg>],
  ["Store", <svg width="30" height="30" viewBox="0 0 30 30"><path d="M8.500 7V2h13v5" fill="none" stroke="#35b6e8" strokeWidth="2" /><path d="M1 6h28v19q0 4-4 4H5q-4 0-4-4z" fill="#ececec" /><path d="M9.500 12h5v5h-5z" fill="#f25022" /><path d="M15.500 12h5v5h-5z" fill="#7fba00" /><path d="M9.500 18h5v5h-5z" fill="#00a4ef" /><path d="M15.500 18h5v5h-5z" fill="#ffb900" /></svg>],
  ["File Explorer", <svg width="30" height="28" viewBox="0 0 30 28"><path d="M0 2q0-1.500 1.500-1.500H10L13 4v4H0z" fill="#dc9a08" /><path d="M0 5h10l3-1.500h17V27H0z" fill="#fcca3c" /><path d="M5 27v-5q0-2 2-2h16q2 0 2 2v5z" fill="#0f7ad0" /><path d="M8 23h14" stroke="#0a5599" /></svg>, "dot"],
  ["Edge", (
    <svg width="30" height="30" viewBox="0 0 30 30">
      <defs>
        <linearGradient id="egA" x1="0" y1="0" x2="1" y2=".4"><stop offset="0" stopColor="#1f9fe0" /><stop offset=".5" stopColor="#2fc4d0" /><stop offset="1" stopColor="#62e04c" /></linearGradient>
        <linearGradient id="egB" x1="0" y1="0" x2=".6" y2="1"><stop offset="0" stopColor="#1796dc" /><stop offset="1" stopColor="#0a66c0" /></linearGradient>
      </defs>
      <path d="M0 14q0 9 7 14 10 5 18-3l3-4H15V8z" fill="url(#egB)" />
      <path d="M0 14A15 15 0 0 1 30 14q0 6-6 6-5 0-5-2 1-1 1-3 0-6-8-7Q4 8 0 14z" fill="url(#egA)" />
      <path d="M13 12q-4 4-2 9 3 8 12 6l5-5v-3l-8-2z" fill="#1250a0" />
      <path d="M19 18q1-1 1-3 0-4-4-3-5 1-4 6 2 5 8 5 5 0 9-4l1-3q-2 4-6 4-5 0-5-2z" fill="#28261f" />
    </svg>
  )],
  ["WhatsApp", <FaWhatsapp size={34} color="#25d366" />],
  ["Chrome", <Chrome />],
  ["Chrome profile", <Chrome />, "dot", true],
  ["GitHub", <span className="flex size-[30px] items-center justify-center bg-[#17151b]"><FaGithub size={27} color="#fff" /></span>, "dot", true],
];

const Taskbar = () => (
  <footer className="grid h-[60px] grid-cols-[1fr_auto_1fr] items-center border-t border-[#4a4a46] bg-[linear-gradient(90deg,#282622,#2a2723_40%,#28261f_62%,#2e2621_75%,#2b2722)] text-white">
    <button className="flex items-center gap-[11px] pl-[25px] text-left text-sm leading-5">
      <span className="relative">
        <svg width="28" height="28" viewBox="0 0 28 28"><path d="M2 14h20v7L4 28z" fill="#128fa8" /><path d="M9 7h18v15q-12 3-18-2z" fill="#2db4ea" /><path d="M0 5q9-4 15 0l3 14-15 3z" fill="#0f6fd2" /><circle cx="10" cy="13" r="5" fill="#fff" /><path d="M18 13h7M18 17h7" stroke="#fff" strokeWidth="1.500" /></svg>
        <span className="absolute -top-[10px] left-[14px] flex size-5 items-center justify-center rounded-full bg-[#ff99a4] text-xs text-black">1</span>
      </span>
      <span><span className="block">News for you</span><span className="block text-[#c4c2c0]">Trump’s bid to e...</span></span>
    </button>
    <div className="flex items-center pl-[11px]">
      <IconBtn label="Start" className="mr-4">
        <svg width="30" height="30" viewBox="0 0 30 30"><defs><linearGradient id="win" x1="0" y1="0" x2="1" y2="1"><stop offset="0" stopColor="#7deaff" /><stop offset="1" stopColor="#0a8cf0" /></linearGradient></defs><path d="M0 0h14.500v14H0zM15.500 0H30v14H15.500zM0 15h14.500v15H0zM15.500 15H30v15H15.500z" fill="url(#win)" /></svg>
      </IconBtn>
      <label className="mr-1 flex h-10 w-[274px] items-center gap-[13px] rounded-full border border-[#555350] bg-[#42403e] pl-3.5">
        <svg width="19" height="19" viewBox="0 0 19 19" fill="none" stroke="#ddd" strokeWidth="2"><circle cx="8" cy="8" r="6.700" /><path d="M13 13l5 5" /></svg>
        <input placeholder="Search" className="w-40 bg-transparent text-base outline-none placeholder:text-[#d0cecc]" />
      </label>
      {apps.map(([name, icon, run, badge]) => (
        <button key={name} aria-label={name} className="relative flex h-[48px] w-[55px] items-center justify-center">
          <span>{icon}</span>{badge && <Badge />}
          {run && <span className="absolute bottom-0 h-1 w-2 rounded-full bg-[#9b9997]" />}
        </button>
      ))}
      <button aria-label="Excel" className="relative ml-[3px] flex h-[50px] w-[50px] items-center justify-center rounded-md border border-[#45403c] bg-[#3a3531]">
        <svg width="28" height="27" viewBox="0 0 28 27"><path d="M14 3h13v21H14z" fill="#fff" stroke="#217346" strokeWidth="1.500" /><path d="M17 7h3M17 10h3M17 13.500h3M17 17h3M17 20h3M22 7h3M22 10h3M22 13.500h3M22 17h3M22 20h3" stroke="#217346" strokeWidth="1.800" /><path d="M0 3l16-3v27L0 24z" fill="#217346" /><path d="M4.500 8.500l7 10M11.500 8.500l-7 10" stroke="#fff" strokeWidth="2.200" /></svg>
        <span className="absolute bottom-0 h-1 w-5 rounded-full bg-[#4cc2ff]" />
      </button>
    </div>
    <div className="flex items-center justify-end pr-[25px] text-sm">
      <IconBtn label="Show hidden icons"><svg width="14" height="9" viewBox="0 0 14 9" fill="none" stroke="#fff" strokeWidth="2"><path d="M1 8l6-6 6 6" /></svg></IconBtn>
      <svg width="20" height="14" viewBox="0 0 20 14" className="ml-6"><path d="M4 13a4 4 0 0 1-1-8A6 6 0 0 1 14 4l-4 9z" fill="#aaa" /><path d="M4 13l9-7q7-1 7 4 0 3-3 3z" fill="#fff" /></svg>
      <span className="ml-6">ENG</span>
      <svg width="20" height="16" viewBox="0 0 20 16" className="ml-[22px]" fill="none" stroke="#fff" strokeWidth="1.500"><path d="M1 6a13 13 0 0 1 18 0M4 9a9 9 0 0 1 12 0M7 12a4.500 4.500 0 0 1 6 0" /><circle cx="10" cy="14" r="1.500" fill="#fff" stroke="none" /></svg>
      <svg width="20" height="18" viewBox="0 0 20 18" className="ml-[10px]" fill="none" stroke="#fff" strokeWidth="1.500"><path d="M1 6.500v5h3.500l4.500 4v-13l-4.500 4zM12 6q2 3 0 6" /><path d="M14.500 4q4 5 0 10M17 2q5 7 0 14" stroke="#666" /></svg>
      <svg width="21" height="17" viewBox="0 0 21 17" className="ml-[10px]" fill="none" stroke="#fff" strokeWidth="1.500"><path d="M9 4h7q2 0 2 2v7q0 2-2 2H4q-2 0-2-2v-3" /><path d="M9 6h6.500v7H4v-2z" fill="#fff" stroke="none" /><path d="M19.500 8v3" strokeWidth="2.500" /><path d="M4 0L0 7h3l-1 5 5-7H4z" fill="#fff" stroke="none" /></svg>
      <div className="ml-[21px] text-right leading-5"><div>12:39 PM</div><div>1/26/2025</div></div>
    </div>
  </footer>
);

export default function App() {
  return (
    <div className={`flex h-screen flex-col overflow-hidden bg-[#e6e6e6] ${ui}`}>
      <header className="relative shrink-0 bg-[#217346]"><Backdrop /><TitleBar /><Tabs /></header>
      <div className="shrink-0"><Ribbon /></div>
      <main className="flex min-h-0 flex-1"><Sheet /><VScroll /></main>
      <div className="shrink-0"><SheetTabs /><StatusBar /><Taskbar /></div>
    </div>
  );
}
